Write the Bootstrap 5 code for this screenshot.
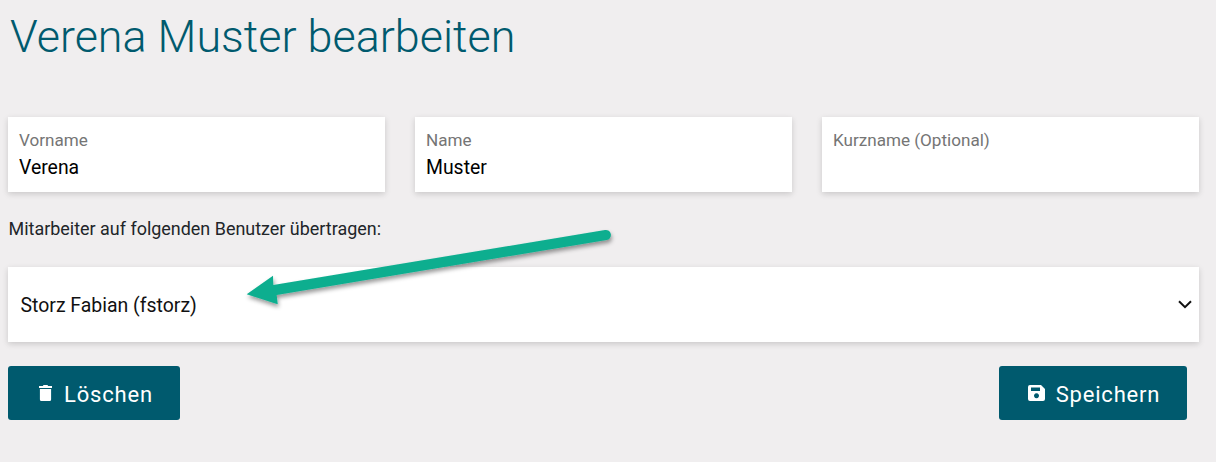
<!DOCTYPE html>
<html lang="de">
<head>
    <meta charset="UTF-8">
    <title>Verena Muster bearbeiten</title>
    <link rel="stylesheet" href="https://cdn.jsdelivr.net/npm/bootstrap@5.3.3/dist/css/bootstrap.min.css">
    <style>
        body {
            background: #f0eeef;
            font-family: Roboto, "Liberation Sans", sans-serif;
            color: #212529;
            overflow: hidden;
        }
        .seite {
            position: relative;
            height: 462px;
            padding: 0 17px 0 8px;
        }
        .titel {
            margin: 0;
            padding: 9px 0 0 2px;
            height: 117px;
            font-size: 44.9px;
            font-weight: 300;
            line-height: 56px;
            color: #005a6e;
        }
        .feld-reihe {
            gap: 30px;
        }
        .feld {
            flex: 1 1 0;
            height: 75px;
            padding: 14px 11px 0;
            background: #fff;
            box-shadow: 0 2px 6px rgba(0, 0, 0, .16);
        }
        .feld label {
            display: block;
            margin: 0;
            font-size: 17.1px;
            line-height: 19px;
            color: #757575;
        }
        .feld input {
            display: block;
            width: 100%;
            padding: 0;
            margin-top: 6px;
            border: 0;
            outline: 0;
            background: transparent;
            font-size: 19.4px;
            line-height: 24px;
            color: #000;
        }
        .hinweis {
            margin: 0;
            padding: 27px 0 0 .5px;
            height: 75px;
            font-size: 17.95px;
            line-height: 20px;
        }
        .auswahl {
            height: 75px;
            padding: 2px 7px 0 12.5px;
            background: #fff;
            box-shadow: 0 2px 6px rgba(0, 0, 0, .16);
            font-size: 19.45px;
            color: #111;
        }
        .auswahl svg {
            margin-bottom: 2px;
        }
        .knopf-reihe {
            margin-top: 24px;
            padding-right: 12px;
        }
        .knopf {
            height: 54px;
            padding: 2px 0 0;
            border: 0;
            border-radius: 3px;
            background: #005a6e;
            color: #fff;
            font-size: 22px;
            letter-spacing: .8px;
            gap: 11px;
        }
        .knopf svg {
            margin-bottom: 2px;
        }
        .knopf:hover {
            background: #005a6e;
            color: #fff;
        }
        .knopf-loeschen { width: 172px; gap: 12px; padding-left: 4px; }
        .knopf-speichern { width: 188px; padding-left: 2px; }
        .pfeil {
            position: absolute;
            left: 240px;
            top: 225px;
            overflow: visible;
        }
    </style>
</head>
<body>
    <div class="seite">
        <h1 class="titel">Verena Muster bearbeiten</h1>
        <div class="d-flex feld-reihe">
            <div class="feld">
                <label for="vorname">Vorname</label>
                <input id="vorname" type="text" value="Verena">
            </div>
            <div class="feld">
                <label for="name">Name</label>
                <input id="name" type="text" value="Muster">
            </div>
            <div class="feld">
                <label for="kurzname">Kurzname (Optional)</label>
                <input id="kurzname" type="text">
            </div>
        </div>
        <p class="hinweis">Mitarbeiter auf folgenden Benutzer übertragen:</p>
        <div class="auswahl d-flex align-items-center justify-content-between">
            <span>Storz Fabian (fstorz)</span>
            <svg width="14" height="9" viewBox="0 0 14 9"><path d="M1 1.2l6 6 6-6" fill="none" stroke="#111" stroke-width="2"/></svg>
        </div>
        <div class="knopf-reihe d-flex justify-content-between">
            <button type="button" class="btn knopf knopf-loeschen d-flex align-items-center justify-content-center">
                <svg width="13" height="16" viewBox="0 0 13 16"><path d="M4.500 0h4l.6 1h3.900v2H0V1h3.900zM.9 4h11.200v10.500q0 1.500-1.500 1.500H2.400q-1.500 0-1.500-1.500z" fill="#fff"/></svg>
                <span>Löschen</span>
            </button>
            <button type="button" class="btn knopf knopf-speichern d-flex align-items-center justify-content-center">
                <svg width="17" height="16" viewBox="0 0 17 16"><path fill-rule="evenodd" d="M2 0h11l4 4v10q0 2-2 2H2q-2 0-2-2V2q0-2 2-2zM3 2.500v3.500h9V2.500zM8.500 8.300a2.500 2.500 0 1 0 .01 0z" fill="#fff"/></svg>
                <span>Speichern</span>
            </button>
        </div>
        <svg class="pfeil" width="375" height="85" viewBox="0 0 375 85">
            <defs>
                <filter id="pfeil-schatten" x="-5%" y="-20%" width="110%" height="150%">
                    <feDropShadow dx="1" dy="3" stdDeviation="2" flood-color="#000" flood-opacity=".4"/>
                </filter>
            </defs>
            <path d="M6.700 69.300L33 50.700L33.300 60L365 5a5 5 0 0 1 1.700 10L36.700 70L37.700 79.300z" fill="#0bae8f" filter="url(#pfeil-schatten)"/>
        </svg>
    </div>
    <script src="https://cdn.jsdelivr.net/npm/bootstrap@5.3.3/dist/js/bootstrap.bundle.min.js"></script>
</body>
</html>
